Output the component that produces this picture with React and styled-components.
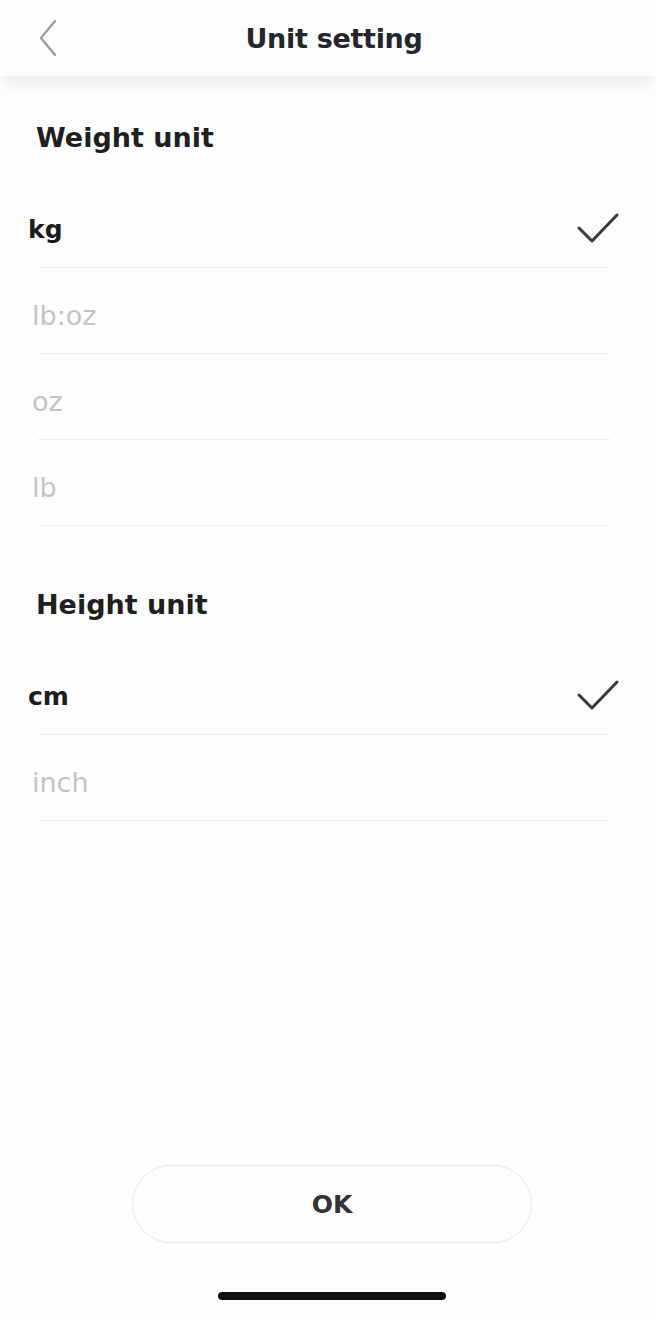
import React from 'react'
import styled, { createGlobalStyle } from 'styled-components'

const GlobalStyle = createGlobalStyle`
  html, body {
    margin: 0;
    padding: 0;
    background: #fdfdfd;
  }
  body {
    font-family: "DejaVu Sans", "Liberation Sans", sans-serif;
  }
`

const Page = styled.div`
  display: flex;
  flex-direction: column;
  width: 656px;
  min-height: 1318px;
  background: #fdfdfd;
`

const Header = styled.div`
  position: relative;
  display: flex;
  align-items: center;
  justify-content: center;
  height: 76px;
  background: #fdfdfd;
  box-shadow: 0 12px 14px -4px rgba(0, 0, 0, 0.07);
`

const BackButton = styled.div`
  position: absolute;
  left: 36px;
  top: 18px;
  width: 24px;
  height: 40px;
`

const Title = styled.div`
  font-size: 27px;
  font-weight: bold;
  color: #25252d;
  letter-spacing: -0.3px;
  padding-left: 12px;
`

const SectionTitle = styled.div`
  padding: ${(p) => (p.$first ? '46px' : '63px')} 0 28px 36px;
  font-size: 27px;
  line-height: 32px;
  font-weight: bold;
  color: #1f1f1f;
`

const Row = styled.div`
  display: flex;
  align-items: center;
  justify-content: space-between;
  height: 78px;
  padding: 8px 36px 0 28px;
  position: relative;
  &::after {
    content: '';
    position: absolute;
    left: 38px;
    right: 46px;
    bottom: 0;
    height: 1.5px;
    background: #ececec;
  }
`

const Label = styled.span`
  font-size: ${(p) => (p.$active ? '25px' : '27px')};
  font-weight: ${(p) => (p.$active ? 'bold' : 'normal')};
  color: ${(p) => (p.$active ? '#1c1c1c' : '#c4c4c4')};
  padding-left: ${(p) => (p.$active ? '0' : '4px')};
`

const Footer = styled.div`
  margin-top: auto;
  display: flex;
  flex-direction: column;
  align-items: center;
  gap: 49px;
  padding: 0 0 18px 8px;
`

const OkButton = styled.div`
  display: flex;
  align-items: center;
  justify-content: center;
  width: 398px;
  height: 76px;
  border: 1.5px solid #e8e8e8;
  border-radius: 40px;
  font-size: 25px;
  font-weight: bold;
  color: #333;
`

const HomeIndicator = styled.div`
  width: 228px;
  height: 8px;
  border-radius: 4px;
  background: #111;
`

const Check = () => (
  <svg width="44" height="34" viewBox="0 0 44 34" fill="none">
    <path d="M3 16 L16 29 L41 3" stroke="#3a3a3a" strokeWidth="3" strokeLinecap="round" strokeLinejoin="round" />
  </svg>
)

const weightUnits = ['kg', 'lb:oz', 'oz', 'lb']
const heightUnits = ['cm', 'inch']

function UnitList({ units, selected }) {
  return units.map((u) => (
    <Row key={u}>
      <Label $active={u === selected}>{u}</Label>
      {u === selected && <Check />}
    </Row>
  ))
}

export default function App() {
  return (
    <Page>
      <GlobalStyle />
      <Header>
        <BackButton>
          <svg width="24" height="40" viewBox="0 0 24 40" fill="none">
            <path d="M19 3 L5 20 L19 37" stroke="#9a9a9a" strokeWidth="2.2" strokeLinecap="round" strokeLinejoin="round" />
          </svg>
        </BackButton>
        <Title>Unit setting</Title>
      </Header>

      <SectionTitle $first>Weight unit</SectionTitle>
      <UnitList units={weightUnits} selected="kg" />

      <SectionTitle>Height unit</SectionTitle>
      <UnitList units={heightUnits} selected="cm" />

      <Footer>
        <OkButton>OK</OkButton>
        <HomeIndicator />
      </Footer>
    </Page>
  )
}
